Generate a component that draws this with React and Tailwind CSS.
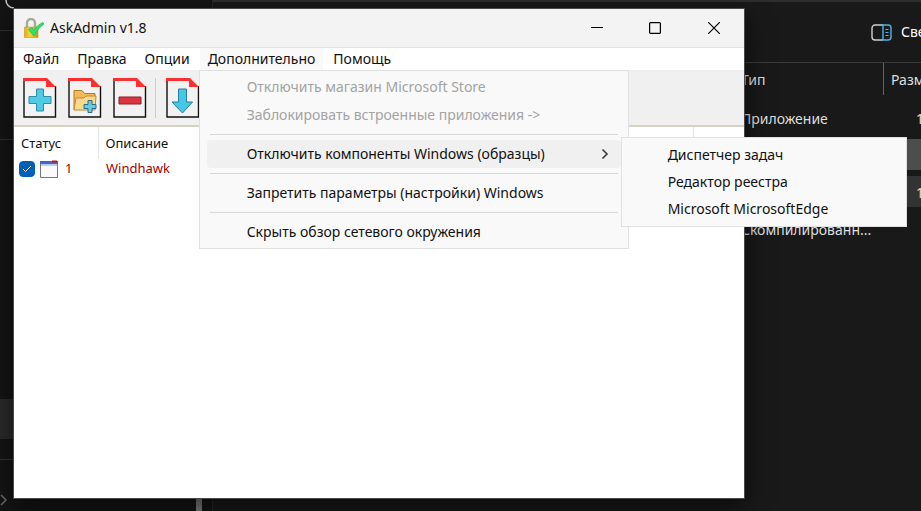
import { useState } from "react";

const menus = ["Файл", "Правка", "Опции", "Дополнительно", "Помощь"];

const extraItems = [
  { label: "Отключить магазин Microsoft Store", disabled: true },
  { label: "Заблокировать встроенные приложения ->", disabled: true },
  null,
  {
    label: "Отключить компоненты Windows (образцы)",
    children: ["Диспетчер задач", "Редактор реестра", "Microsoft MicrosoftEdge"]
  },
  null,
  { label: "Запретить параметры (настройки) Windows" },
  null,
  { label: "Скрыть обзор сетевого окружения" }
];

const files = [
  { type: "Приложение", size: "1" },
  { type: "", size: "", tone: "bg-[#4d4d4d]" },
  { type: "", size: "1", tone: "bg-[#333333]" },
  { type: "Скомпилированн...", size: "" }
];

const LockIcon = () => (
  <svg width="20" height="21" viewBox="0 0 20 21" aria-hidden="true">
    <defs>
      <linearGradient id="lock" x1="0" x2="1">
        <stop offset="0" stopColor="#dcae14" />
        <stop offset="0.4" stopColor="#f7d43a" />
        <stop offset="1" stopColor="#c99408" />
      </linearGradient>
    </defs>
    <path d="M3 10V5a4 4 0 0 1 8 0v5" fill="none" stroke="#a9a99c" strokeWidth="2.400" />
    <path d="M0.500 9h13.500v10.500H0.500z" fill="url(#lock)" stroke="#c79a14" strokeWidth="0.600" />
    <path d="M4.500 11.500l3-2 2.500 2.500c2.500-3.500 5.500-6 9-7.500l1 1.500c-4 2.500-7 6.500-9.500 11.500H9.500z" fill="#2ee06e" stroke="#22c25c" strokeWidth="0.800" />
  </svg>
);

const PageIcon = ({ children }) => (
  <svg width="34" height="41" viewBox="0 0 34 41" aria-hidden="true">
    <path d="M1 1H24L33 10V40H1z" fill="#f2f2f2" />
    <path d="M1 1V40H32.500V9" fill="none" stroke="#111" strokeWidth="1.400" />
    <path d="M0 1h24l9 9h-10V4H0z" fill="#fb3030" />
    {children}
  </svg>
);

const AddIcon = () => (
  <PageIcon>
    <path d="M13.500 12h7v7.500H28v7h-7.500V34h-7v-7.500H6v-7h7.500z" fill="#4fcbe6" stroke="#2f8da8" />
  </PageIcon>
);

const FolderIcon = () => (
  <PageIcon>
    <path d="M6 33V13.500h8l2.500 3H27V20" fill="#f3b95a" stroke="#b07a25" />
    <path d="M6 33l2-12h8l2-2h10l-1 14z" fill="#fbd98c" stroke="#c18a30" />
    <path d="M20 23.500h4v4h4v4h-4v4h-4v-4h-4v-4h4z" fill="#6ccbe4" stroke="#286f88" />
  </PageIcon>
);

const RemoveIcon = () => (
  <PageIcon>
    <path d="M6 20h22v7H6z" fill="#d9363f" stroke="#8f2026" />
  </PageIcon>
);

const DownIcon = () => (
  <PageIcon>
    <path d="M12.500 12h8v13h6L16.500 36 6 25h6.500z" fill="#45c8e8" stroke="#2a7c98" />
  </PageIcon>
);

const AppIcon = () => (
  <svg width="18" height="18" viewBox="0 0 18 18" aria-hidden="true">
    <path d="M0.500 1.500h17v16H0.500z" fill="#fafafa" stroke="#777" />
    <path d="M0 1h18v3H0z" fill="#3f66c8" />
    <path d="M1 4h16v2H1z" fill="#b9ccf2" />
    <path d="M12 0.500h5v2h-5z" fill="#c01818" />
  </svg>
);

const Explorer = () => (
  <div className="flex h-full text-[#dedede]">
    <aside className="flex w-[213px] shrink-0 flex-col border-r border-[#262626] bg-[#141414]">
      <div className="h-[31px] shrink-0 border-b border-[#303030]">
        <svg width="14" height="9" viewBox="0 0 14 9" fill="none" stroke="#c8c8c8" strokeWidth="1.500" aria-hidden="true">
          <path d="M6 0c0 4 3 8 8 8" />
        </svg>
      </div>
      <div className="h-[109px] shrink-0 border-b border-[#303030]" />
      <div className="flex-1" />
      <div className="h-10 shrink-0 bg-[#2a2a2a]" />
      <div className="h-[21px] shrink-0 border-b border-[#333333]" />
      <div className="flex h-[51px] shrink-0 items-end justify-between pr-[10px]">
        <svg className="mb-1" width="9" height="14" viewBox="0 0 9 14" fill="none" stroke="#6a6a6a" strokeWidth="1.500" aria-hidden="true">
          <path d="M1 2l5 5-5 5" />
        </svg>
        <div className="h-full w-[6px] bg-[#7a7a7a]" />
      </div>
    </aside>
    <main className="min-w-0 flex-1 bg-[#191919]">
      <div className="flex h-[63px] items-center justify-end overflow-hidden border-t-2 border-b border-t-[#2e2e2e] border-b-[#3c3c3c]">
        <button className="flex w-[50px] items-center gap-[9px] text-sm whitespace-nowrap text-white">
          <svg className="shrink-0" width="21" height="17" viewBox="0 0 21 17" fill="none" aria-hidden="true">
            <path d="M12 1H4a3 3 0 0 0-3 3v9a3 3 0 0 0 3 3h8" stroke="#d0d0d0" strokeWidth="1.400" />
            <path d="M12 1h5a3 3 0 0 1 3 3v9a3 3 0 0 1-3 3h-5z" stroke="#4cb4ec" strokeWidth="1.400" />
            <path d="M14.500 5.500h3M14.500 8.500h3M14.500 11.500h3" stroke="#4cb4ec" strokeWidth="1.200" />
          </svg>
          Сведения
        </button>
      </div>
      <table className="w-full table-fixed border-collapse text-left text-sm">
        <thead>
          <tr className="h-9 align-top">
            <th />
            <th className="w-[143px] p-0 font-normal">
              <div className="flex h-8 items-center border-r border-[#636363] pt-[2px]">Тип</div>
            </th>
            <th className="w-[37px] p-0 font-normal">
              <div className="flex h-8 items-center overflow-hidden pt-[2px] pl-[7px]">Размер</div>
            </th>
          </tr>
        </thead>
        <tbody>
          {files.map((file, index) => (
            <tr key={index} className="h-[37px]">
              <td />
              <td className="p-0 whitespace-nowrap">
                <div className={`flex h-[31px] items-center pt-[3px] ${file.tone || ""}`}>{file.type}</div>
              </td>
              <td className="p-0">
                <div className={`flex h-[31px] items-center overflow-hidden pt-[3px] pl-8 ${file.tone || ""}`}>{file.size}</div>
              </td>
            </tr>
          ))}
        </tbody>
      </table>
    </main>
  </div>
);

const Submenu = ({ items }) => (
  <ul className="absolute -top-[3px] left-full z-20 w-[286px] border border-[#e0e0e0] bg-[#f9f9f9] pt-[3px] pb-1">
    {items.map((item) => (
      <li key={item}>
        <button className="flex h-[27px] w-full items-center pl-[46px] text-left">{item}</button>
      </li>
    ))}
  </ul>
);

const Dropdown = () => (
  <ul className="absolute top-full -left-px z-10 w-[430px] border border-[#e0e0e0] bg-[#f9f9f9] px-[7px] py-[2px]">
    {extraItems.map((item, index) =>
      item ? (
        <li key={index} className="relative">
          <button
            disabled={item.disabled}
            className={`flex h-7 w-full items-center justify-between rounded pr-3 pl-10 whitespace-nowrap disabled:text-[#a3a3a3] ${
              item.children ? "bg-[#f0f0f0]" : ""
            }`}
          >
            {item.label}
            {item.children && (
              <svg width="8" height="12" viewBox="0 0 8 12" fill="none" stroke="#3a3a3a" strokeWidth="1.600" aria-hidden="true">
                <path d="M1.500 1.500L6 6l-4.500 4.500" />
              </svg>
            )}
          </button>
          {item.children && <Submenu items={item.children} />}
        </li>
      ) : (
        <li key={index} className="flex h-[11px] items-center px-[3px]">
          <hr className="w-full border-[#d7d7d7]" />
        </li>
      )
    )}
  </ul>
);

const App = () => {
  const [openMenu, setOpenMenu] = useState("Дополнительно");
  const [checked, setChecked] = useState(true);

  return (
    <div className="relative h-screen overflow-hidden bg-[#191919] font-['Noto_Sans','Open_Sans',sans-serif]">
      <Explorer />
      <section className="absolute top-[9px] right-[177px] bottom-[13px] left-[14px] flex flex-col bg-white text-sm text-[#111] shadow-[0_0_0_1px_#4a4a4a,0_8px_24px_rgba(0,0,0,0.6)]">
        <header className="flex h-[39px] shrink-0 items-center border-b border-[#e2e2e2] bg-[#f3f3f3] pl-[10px]">
          <LockIcon />
          <h1 className="flex-1 pl-[6px]">AskAdmin v1.8</h1>
          <button aria-label="Свернуть" className="flex h-full w-[58px] items-center justify-center">
            <svg width="12" height="12" viewBox="0 0 12 12" stroke="#000"><path d="M0 5.500h12" /></svg>
          </button>
          <button aria-label="Развернуть" className="flex h-full w-[58px] items-center justify-center">
            <svg width="12" height="12" viewBox="0 0 12 12" fill="none" stroke="#000" strokeWidth="1.200"><rect x="0.600" y="0.600" width="10.800" height="10.800" rx="1" /></svg>
          </button>
          <button aria-label="Закрыть" className="flex h-full w-[60px] items-center justify-center">
            <svg width="12" height="12" viewBox="0 0 12 12" stroke="#000" strokeWidth="1.200"><path d="M0 0l12 12M12 0L0 12" /></svg>
          </button>
        </header>
        <nav className="flex h-[22px] shrink-0 gap-[2px] pl-px">
          {menus.map((menu) => (
            <div key={menu} className="relative">
              <button
                onClick={() => setOpenMenu(menu)}
                className={`flex h-full items-center px-2 ${openMenu === menu ? "bg-[#f9f9f9]" : ""}`}
              >
                {menu}
              </button>
              {menu === "Дополнительно" && openMenu === menu && <Dropdown />}
            </div>
          ))}
        </nav>
        <div className="flex h-[57px] shrink-0 items-center border-b-2 border-[#d5d2c0] bg-[#f0f0f0] pl-[9px]">
          <div className="flex gap-[11px]">
            <button aria-label="Добавить файл"><AddIcon /></button>
            <button aria-label="Добавить папку"><FolderIcon /></button>
            <button aria-label="Удалить"><RemoveIcon /></button>
          </div>
          <div className="mr-[10px] ml-2 h-10 w-px bg-[#cfcdc4]" />
          <button aria-label="Импорт"><DownIcon /></button>
        </div>
        <table className="w-full table-fixed border-collapse text-left text-[13px]">
          <thead>
            <tr className="h-8">
              <th className="w-[84px] border-r border-[#e5e5e5] p-0 pl-[7px] font-normal">Статус</th>
              <th className="border-r border-[#e5e5e5] p-0 pl-[7px] font-normal">Описание</th>
              <th className="w-[51px] p-0" />
            </tr>
          </thead>
          <tbody className="text-[#a50000]">
            <tr className="h-[19px]">
              <td className="p-0 pl-[5px]">
                <label className="flex items-center">
                  <input
                    type="checkbox"
                    checked={checked}
                    onChange={(event) => setChecked(event.target.checked)}
                    className="peer sr-only"
                  />
                  <span className="flex size-4 items-center justify-center rounded border border-[#005fb8] text-white peer-checked:bg-[#005fb8]">
                    <svg width="10" height="8" viewBox="0 0 10 8" fill="none" stroke="currentColor" aria-hidden="true">
                      <path d="M1 4l2.500 2.500L9 1" />
                    </svg>
                  </span>
                  <span className="pr-[7px] pl-[5px]"><AppIcon /></span>
                  1
                </label>
              </td>
              <td className="p-0 pl-2">Windhawk</td>
              <td className="p-0" />
            </tr>
          </tbody>
        </table>
      </section>
    </div>
  );
};

export default App;
